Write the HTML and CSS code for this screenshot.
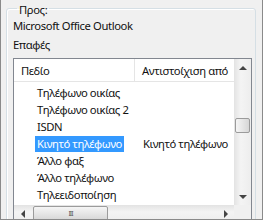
FILE: index.html
```html
<!DOCTYPE html>
<html lang="el">
<head>
    <meta charset="UTF-8">
    <title>Αντιστοίχιση πεδίων</title>
    <link rel="stylesheet" href="styles.css">
</head>
<body>
    <div class="frame">
        <fieldset class="group">
            <legend>Προς:</legend>
            <div class="line">Microsoft Office Outlook</div>
            <div class="line">Επαφές</div>

            <!-- Field list -->
            <div class="listview">
                <div class="list-main">
                    <div class="list-body">
                        <div class="header">
                            <div class="col col-1">Πεδίο</div>
                            <div class="col col-2">Αντιστοίχιση από</div>
                        </div>
                        <div class="rows">
                            <div class="row"><span class="cell c1">Τηλέφωνο οικίας</span><span class="cell c2"></span></div>
                            <div class="row"><span class="cell c1">Τηλέφωνο οικίας 2</span><span class="cell c2"></span></div>
                            <div class="row"><span class="cell c1">ISDN</span><span class="cell c2"></span></div>
                            <div class="row"><span class="cell c1 selected">Κινητό τηλέφωνο</span><span class="cell c2">Κινητό τηλέφωνο</span></div>
                            <div class="row"><span class="cell c1">Άλλο φαξ</span><span class="cell c2"></span></div>
                            <div class="row"><span class="cell c1">Άλλο τηλέφωνο</span><span class="cell c2"></span></div>
                            <div class="row"><span class="cell c1">Τηλεειδοποίηση</span><span class="cell c2"></span></div>
                        </div>
                    </div>
                    <div class="vscroll">
                        <div class="arrow"><i class="tri up"></i></div>
                        <div class="track">
                            <div class="thumb"></div>
                        </div>
                        <div class="arrow"><i class="tri down"></i></div>
                    </div>
                </div>
                <div class="list-bottom">
                    <div class="hscroll">
                        <div class="arrow"><i class="tri left"></i></div>
                        <div class="htrack">
                            <div class="hthumb">III</div>
                        </div>
                        <div class="arrow"><i class="tri right"></i></div>
                    </div>
                    <div class="corner"></div>
                </div>
            </div>
        </fieldset>
    </div>
</body>
</html>
```

FILE: styles.css
```css
body {
    margin: 0;
    font-family: 'Noto Sans', 'DejaVu Sans', sans-serif;
    font-size: 11.25px;
    letter-spacing: -0.4px;
    color: #111;
}
.frame {
    width: 263px;
    height: 220px;
    box-sizing: border-box;
    background-color: #f0f0f0;
    border: 1px solid #8a8a8a;
    border-top: none;
    overflow: hidden;
}
.group {
    margin: 1px 6px 0 5px;
    padding: 0 0 0 6px;
    border: 1px solid #d5dfe5;
    border-radius: 3px;
    box-shadow: inset 1px 1px 0 #fff;
    height: 240px;
}
.group legend {
    padding: 2px 2px 0;
    margin-left: 4px;
    line-height: 13px;
}
.line {
    line-height: 19px;
}
.listview {
    margin-top: 4px;
    width: 237px;
    border: 1px solid #828790;
    background-color: white;
}
.list-main {
    display: flex;
    height: 146px;
}
.list-body {
    flex: 1;
    overflow: hidden;
}
.header {
    display: flex;
    height: 22px;
    border-bottom: 1px solid #e5e5e5;
}
.col {
    padding-left: 7px;
    line-height: 24px;
    box-sizing: border-box;
    white-space: nowrap;
    overflow: hidden;
}
.col-1 {
    width: 121px;
    border-right: 1px solid #e5e5e5;
}
.col-2 {
    flex: 1;
}
.rows {
    padding-top: 3px;
}
.row {
    display: flex;
    height: 17px;
    line-height: 16px;
}
.cell {
    white-space: nowrap;
}
.c1 {
    margin-left: 21px;
    padding: 0 2px;
    align-self: flex-start;
    height: 16px;
}
.row .c2 {
    margin-left: auto;
    width: 91px;
}
.selected {
    background-color: #3399ff;
    color: white;
}
.vscroll {
    width: 17px;
    display: flex;
    flex-direction: column;
    background: linear-gradient(to right, #e3e3e3, #f4f4f4 40%, #ededed);
}
.arrow {
    width: 17px;
    height: 17px;
    display: flex;
    align-items: center;
    justify-content: center;
}
.tri {
    width: 0;
    height: 0;
    border: 4px solid transparent;
}
.tri.up {
    border-top: none;
    border-bottom: 4px solid #444;
}
.tri.down {
    border-bottom: none;
    border-top: 4px solid #444;
}
.tri.left {
    border-left: none;
    border-right: 4px solid #444;
}
.tri.right {
    border-right: none;
    border-left: 4px solid #444;
}
.track {
    flex: 1;
    padding-top: 42px;
}
.thumb {
    margin: 0 1px;
    height: 13px;
    border: 1px solid #9b9b9b;
    border-radius: 2px;
    background: linear-gradient(to right, #f5f5f5, #e6e6e6 50%, #d6d6d6);
}
.list-bottom {
    display: flex;
    height: 17px;
}
.hscroll {
    flex: 1;
    display: flex;
    background: linear-gradient(to bottom, #e3e3e3, #f4f4f4 40%, #ededed);
}
.htrack {
    flex: 1;
    padding-left: 2px;
}
.hthumb {
    width: 75px;
    height: 15px;
    margin-top: 1px;
    box-sizing: border-box;
    border: 1px solid #9b9b9b;
    border-radius: 2px;
    background: linear-gradient(to bottom, #f5f5f5, #e6e6e6 50%, #d6d6d6);
    font-size: 7px;
    line-height: 13px;
    text-align: center;
    color: #555;
    letter-spacing: -1px;
}
.corner {
    width: 17px;
    background-color: #f0f0f0;
}
```
